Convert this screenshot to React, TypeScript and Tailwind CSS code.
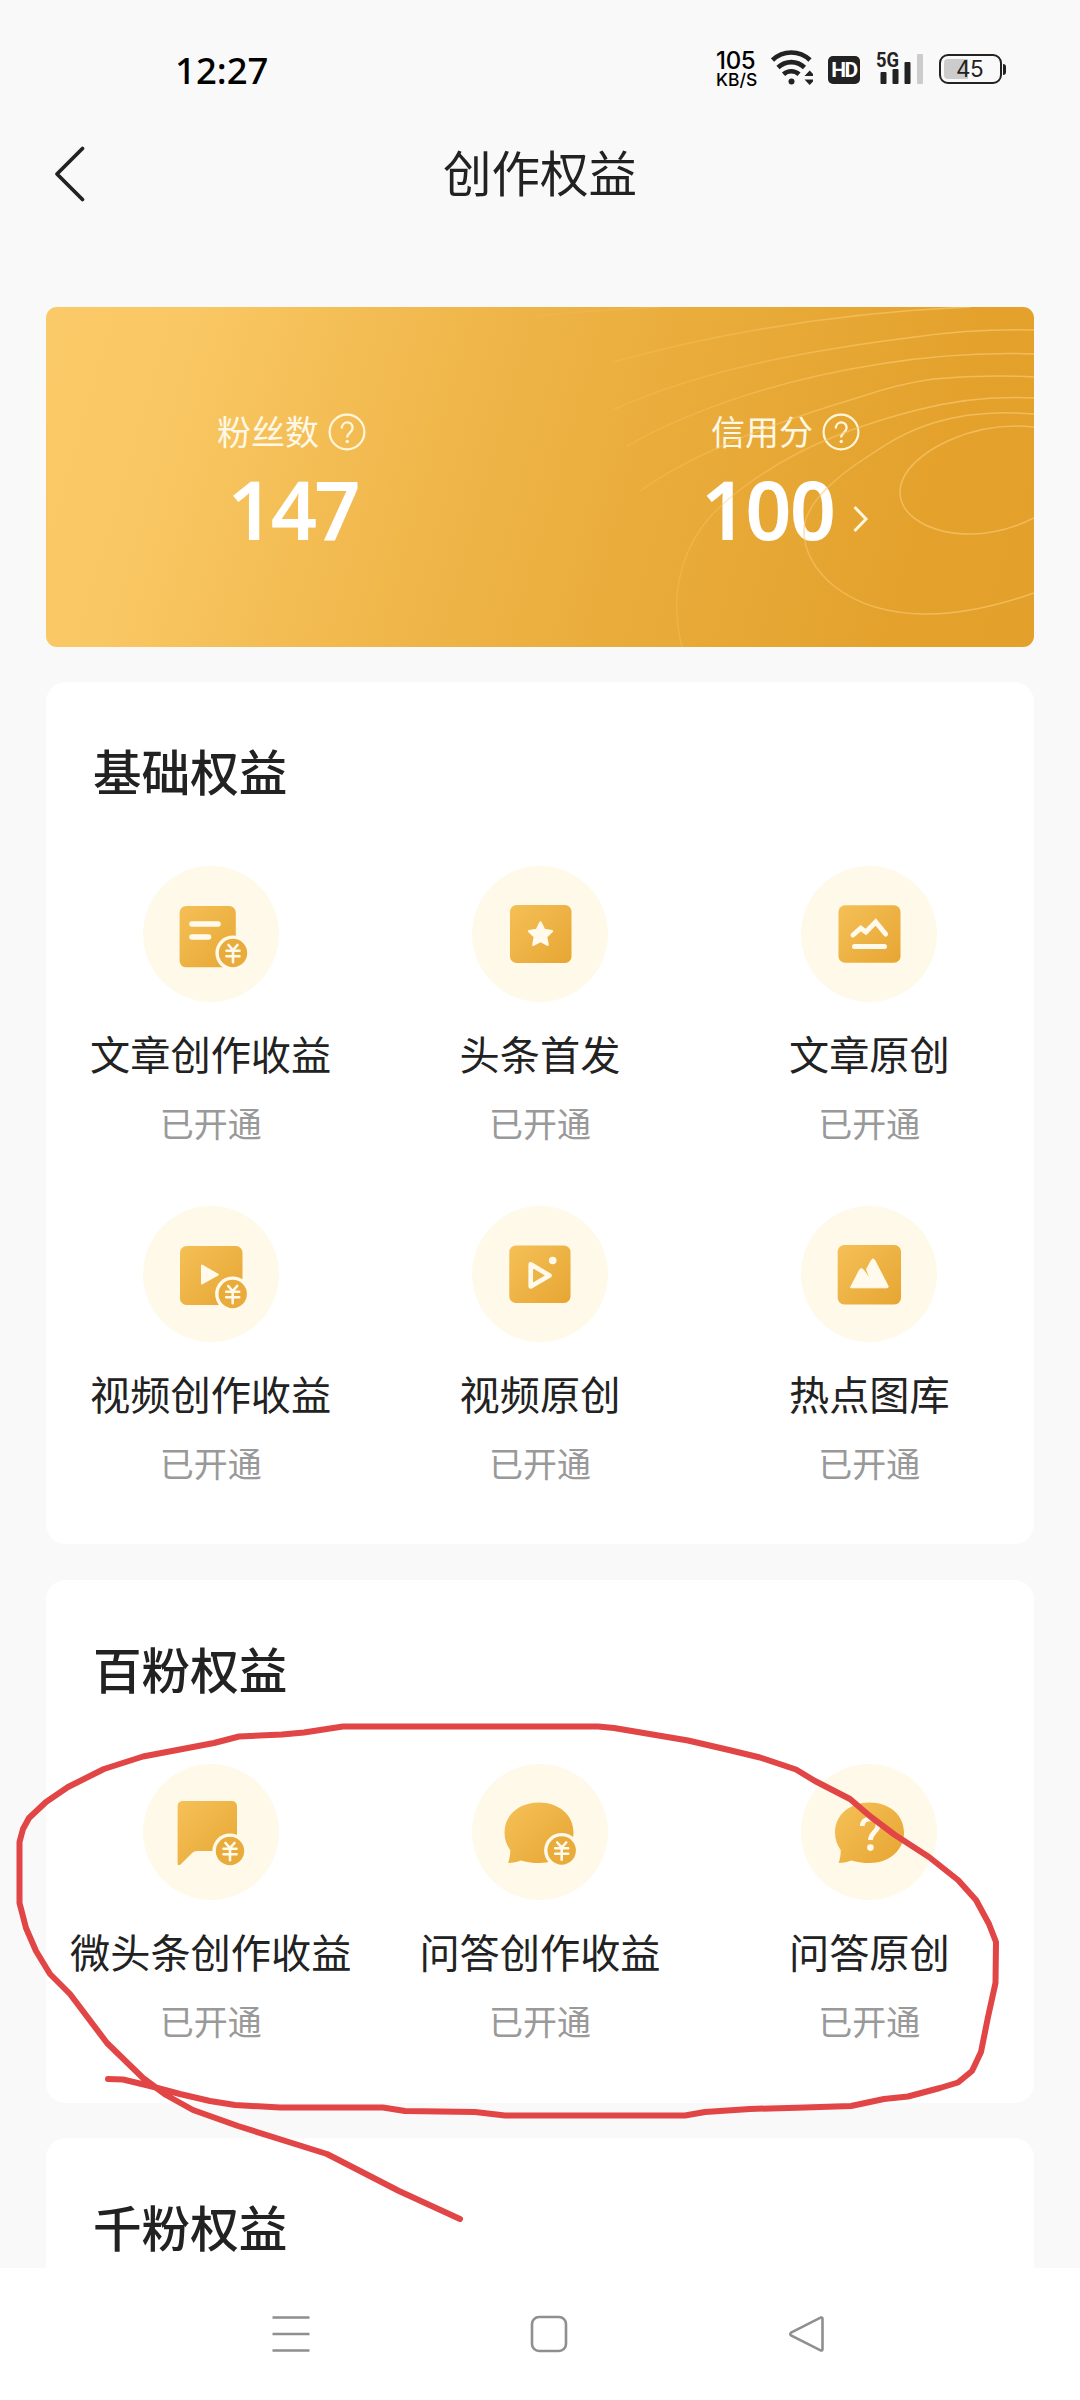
import React from "react";

const GOLD = "url(#gold)";
const CREAM = "#fffaec";

/** Shared gradient used by every benefit icon. */
function GoldDefs() {
  return (
    <svg width="0" height="0" className="absolute" aria-hidden="true">
      <defs>
        <linearGradient id="gold" gradientUnits="userSpaceOnUse" x1="38" y1="38" x2="100" y2="100">
          <stop offset="0" stopColor="#f5c057" />
          <stop offset="1" stopColor="#e6a532" />
        </linearGradient>
      </defs>
    </svg>
  );
}

function Coin({ x, y }: { x: number; y: number }) {
  return (
    <g transform={`translate(${x} ${y})`}>
      <circle r="17.6" fill={CREAM} />
      <circle r="14.2" fill="#e9ac3c" />
      <path
        d="M-4.5 -8 L0 -3 L4.5 -8 M-6.5 -2.2 H6.5 M-6.5 3.2 H6.5 M0 -3 V9.3"
        fill="none"
        stroke={CREAM}
        strokeWidth="2.6"
        strokeLinecap="round"
      />
    </g>
  );
}

const BUBBLE =
  "M67 38.5 C87 38.5 101.5 51 101.5 68.5 C101.5 86 87 99 67 99 C60 99 54 97.8 49 96.4 C45 97.6 41 99 36.2 99 C37.6 94.5 38.4 90.5 38.2 86 C34.5 81 32.5 75 32.5 68.5 C32.5 51 47 38.5 67 38.5 Z";

const icons: Record<string, React.ReactNode> = {
  article: (
    <>
      <rect x="36.6" y="40" width="56.2" height="61.3" rx="6.5" fill={GOLD} />
      <path d="M49 58 H75 M49 71 H65.5" stroke={CREAM} strokeWidth="5.6" strokeLinecap="round" />
      <Coin x={90} y={87} />
    </>
  ),
  star: (
    <>
      <rect x="38" y="39" width="61.5" height="58" rx="6.5" fill={GOLD} />
      <path
        d="M68.5 56.5 L72.2 64 L80 65.1 L74.2 70.6 L75.6 78.8 L68.5 74.9 L61.4 78.8 L62.8 70.6 L57 65.1 L64.8 64 Z"
        fill={CREAM}
        stroke={CREAM}
        strokeWidth="2.4"
        strokeLinejoin="round"
      />
    </>
  ),
  chart: (
    <>
      <rect x="37.5" y="39.3" width="62" height="57.4" rx="6.5" fill={GOLD} />
      <path
        d="M52 69 L59.7 62.2 L64.9 66 L74.7 56 L84.6 68 M53.5 80.5 H83.5"
        fill="none"
        stroke={CREAM}
        strokeWidth="5"
        strokeLinecap="round"
        strokeLinejoin="miter"
      />
    </>
  ),
  video: (
    <>
      <rect x="37" y="40" width="62.5" height="59" rx="6.5" fill={GOLD} />
      <path
        d="M59 59.6 L74.7 68.7 L59 77.4 Z"
        fill={CREAM}
        stroke={CREAM}
        strokeWidth="2"
        strokeLinejoin="round"
      />
      <Coin x={89.7} y={88} />
    </>
  ),
  play: (
    <>
      <rect x="37.3" y="39.5" width="61.2" height="57.5" rx="6.5" fill={GOLD} />
      <path
        d="M58.7 58.3 L77.5 69.5 L58.7 80.4 Z"
        fill="none"
        stroke={CREAM}
        strokeWidth="4.6"
        strokeLinejoin="round"
      />
      <circle cx="80.7" cy="54.5" r="3.8" fill={CREAM} />
    </>
  ),
  gallery: (
    <>
      <rect x="36.7" y="39" width="63.3" height="59.5" rx="6.5" fill={GOLD} />
      <path
        d="M49.7 81 L58.6 63.8 Q60.3 61.2 62.3 63.8 L69.3 73 L65.5 63.4 L70.5 54 Q72 51.6 73.6 54 L87 80 Q87.6 81.8 86 81.8 H50.3 Q49.2 82 49.7 81 Z"
        fill={CREAM}
        stroke={CREAM}
        strokeWidth="1"
        strokeLinejoin="round"
      />
    </>
  ),
  post: (
    <>
      <path
        d="M40 37 H88.5 Q94 37 94 42.5 V87 H54 Q51 87 49 89 L37.5 100.4 Q34.6 102.5 34.6 99 V42.5 Q34.6 37 40 37 Z"
        fill={GOLD}
      />
      <Coin x={87} y={87} />
    </>
  ),
  answer: (
    <>
      <path d={BUBBLE} fill={GOLD} />
      <Coin x={89.7} y={86.5} />
    </>
  ),
  question: (
    <>
      <path d={BUBBLE} fill={GOLD} transform="translate(1.5 0)" />
      <path
        d="M61.3 62 C61.3 52.5 77 52.5 77 61.5 C77 67.5 69.5 68.5 69.5 76"
        fill="none"
        stroke={CREAM}
        strokeWidth="4.8"
      />
      <circle cx="69.4" cy="83.6" r="3.3" fill={CREAM} />
    </>
  ),
};

type Item = { icon: string; label: string };

const basic: Item[] = [
  { icon: "article", label: "文章创作收益" },
  { icon: "star", label: "头条首发" },
  { icon: "chart", label: "文章原创" },
  { icon: "video", label: "视频创作收益" },
  { icon: "play", label: "视频原创" },
  { icon: "gallery", label: "热点图库" },
];

const hundred: Item[] = [
  { icon: "post", label: "微头条创作收益" },
  { icon: "answer", label: "问答创作收益" },
  { icon: "question", label: "问答原创" },
];

function Benefit({ icon, label }: Item) {
  return (
    <div className="flex h-[340px] flex-col items-center">
      <div className="h-[136px] w-[136px] rounded-full bg-[#fff9ea]">
        <svg width="136" height="136" viewBox="0 0 136 136">
          {icons[icon]}
        </svg>
      </div>
      <div className="mt-[27px] h-[48px] text-[40.2px] leading-[48px] whitespace-nowrap text-[#222]">{label}</div>
      <div className="mt-[26px] h-[40px] text-[34px] leading-[40px] text-[#999]">已开通</div>
    </div>
  );
}

function Section({ title, items, className }: { title: string; items: Item[]; className: string }) {
  return (
    <section className={`mx-[46px] shrink-0 overflow-hidden rounded-[20px] bg-white ${className}`}>
      <h2 className="mt-[58px] h-[60px] pl-[47px] text-[48.6px] leading-[60px] font-medium text-[#222]">{title}</h2>
      <div className="mt-[66px] grid grid-cols-3">
        {items.map((item) => (
          <Benefit key={item.label} {...item} />
        ))}
      </div>
    </section>
  );
}

function StatusBar() {
  return (
    <div className="flex h-[100px] shrink-0 items-start text-black">
      <div className="mt-[46px] ml-[175px] w-[541px] font-['Noto_Sans'] text-[36.5px] leading-[48px] font-medium">
        12:27
      </div>
      <div className="mt-[47px] w-[55px] font-['Inter'] font-medium">
        <div className="h-[26px] text-[24px] leading-[28px] tracking-[-0.3px]">105</div>
        <div className="h-[14px] text-[17.5px] leading-[14px]">KB/S</div>
      </div>
      <svg className="mt-[50px]" width="42" height="36" viewBox="0 0 42 36" fill="none" stroke="#222">
        <path d="M1.5 11.5 A27 27 0 0 1 39 11.5" strokeWidth="4.6" transform="translate(0 -1.5)" />
        <path d="M7 17.5 A19 19 0 0 1 33.5 17.5" strokeWidth="4.6" />
        <path d="M12.5 24.3 A11.5 11.5 0 0 1 28 24.3" strokeWidth="4.6" />
        <circle cx="20.5" cy="31.5" r="3" fill="#222" stroke="none" />
        <path d="M33.5 26 L38.7 20.5 L44 26 Z M33.5 29.5 H44 L38.7 35 Z" fill="#222" stroke="none" />
      </svg>
      <div className="mt-[56px] ml-[15px] flex h-[28px] w-[32px] items-center justify-center rounded-[5px] bg-[#222] font-['Roboto'] text-[21px] leading-none font-bold tracking-[-1.5px] text-white">
        HD
      </div>
      <svg className="mt-[48px] ml-[16px]" width="50" height="38" viewBox="0 0 50 38">
        <text
          x="0"
          y="18.6"
          fontFamily="Roboto"
          fontWeight="700"
          fontSize="20"
          textLength="23"
          lengthAdjust="spacingAndGlyphs"
          fill="#222"
        >
          5G
        </text>
        <rect x="4.5" y="24" width="6" height="12" rx="1" fill="#222" />
        <rect x="16.5" y="21" width="6" height="15" rx="1" fill="#222" />
        <rect x="28.5" y="14" width="6" height="22" rx="1" fill="#222" />
        <rect x="41" y="6" width="6" height="30" rx="1" fill="#ccc" />
      </svg>
      <div className="mt-[54px] ml-[13px] flex items-center">
        <div className="flex h-[30px] w-[63px] items-center rounded-[9px] border-2 border-[#222] p-[3px]">
          <div className="h-full w-[24px] rounded-l-[4px] bg-[#ccc]" />
          <div className="-ml-[12px] font-['Inter'] text-[22.5px] leading-none tracking-[-0.5px] text-[#222]">45</div>
        </div>
        <div className="ml-px h-[11px] w-[3px] rounded-r-sm bg-[#222]" />
      </div>
    </div>
  );
}

function Stat({ label, value, arrow }: { label: string; value: string; arrow?: boolean }) {
  return (
    <div className="flex flex-1 flex-col items-center pt-[103px] pr-[3px]">
      <div className="flex h-[44px] items-center gap-[9px] text-[34px] leading-[44px] text-[#fff8e6]">
        <span className="mt-[-2px]">{label}</span>
        <svg width="38" height="38" viewBox="0 0 38 38" fill="none" stroke="#fff6dc">
          <circle cx="19" cy="19" r="17.4" strokeWidth="2.2" />
          <path d="M13.8 15.5 C13.8 7.5 24.6 7.5 24.6 14.8 C24.6 19.5 19.2 19.8 19.2 24.5" strokeWidth="2.3" />
          <circle cx="19.2" cy="28.5" r="1.7" fill="#fff6dc" stroke="none" />
        </svg>
      </div>
      <div
        className={
          arrow
            ? "mt-[-1px] flex items-center font-['Noto_Sans'] text-[81px] leading-[112px] font-semibold tracking-[-2px] text-white"
            : "mt-[-1px] pl-[2px] font-['Noto_Sans'] text-[81px] leading-[112px] font-semibold tracking-[-3px] text-white"
        }
      >
        {value}
        {arrow && (
          <svg className="mt-[19px] ml-[18px]" width="18" height="30" viewBox="0 0 18 30" fill="none">
            <path d="M2.5 3 L14 15 L2.5 27" stroke="#fff6dc" strokeWidth="3" />
          </svg>
        )}
      </div>
    </div>
  );
}

function SummaryCard() {
  return (
    <div className="relative mx-[46px] mt-[72px] flex h-[340px] shrink-0 overflow-hidden rounded-[11px] bg-[linear-gradient(106deg,#fbca68_0%,#f9c763_14%,#efb548_42%,#e8aa38_66%,#e4a22d_86%,#e3a02b_100%)]">
      <svg className="absolute inset-0" width="988" height="340" viewBox="46 307 988 340" fill="none">
        <defs>
          <linearGradient id="ring" gradientUnits="userSpaceOnUse" x1="560" y1="0" x2="900" y2="0">
            <stop offset="0" stopColor="#f8ca70" stopOpacity="0.1" />
            <stop offset="1" stopColor="#f8c466" stopOpacity="0.75" />
          </linearGradient>
        </defs>
        <g stroke="url(#ring)" strokeWidth="1.5">
          <path d="M1034 427 C1005 424 975 429 950 440 C925 451 900 470 900 492 C900 516 930 534 970 534 C993 534 1014 528 1034 518" />
          <path d="M1034 414 C1000 411 965 413 933 423 C905 432 888 443 867 457 C845 471 805 500 804 530 C803 568 845 614 927 614 C965 614 1000 605 1034 593" />
          <path d="M1034 398 C995 396 955 400 917 410 C878 420 838 433 800 452 C765 470 720 500 700 530 C675 567 672 610 682 647" />
          <path d="M1034 377 C1000 375 965 376 933 379 C905 383 880 390 860 397 C790 418 700 448 640 491" />
          <path d="M1034 354 C980 352 930 356 880 364 C790 378 700 405 627 446" />
          <path d="M1034 330 C990 329 950 332 915 337 C810 350 700 370 613 410" />
          <path d="M970 307 C850 312 730 330 613 362" />
          <path d="M660 307 C620 309 580 311 537 316" />
        </g>
      </svg>
      <Stat label="粉丝数" value="147" />
      <Stat label="信用分" value="100" arrow />
    </div>
  );
}

/** Free-hand red marking over the page. */
function Marking() {
  return (
    <svg
      className="pointer-events-none absolute top-0 left-0"
      width="1080"
      height="2400"
      viewBox="0 0 1080 2400"
      fill="none"
      stroke="#e24545"
      strokeWidth="6"
      strokeLinecap="round"
      strokeLinejoin="round"
    >
      <path d="M108 2079 L123 2079.5 L150 2086 L180 2094 L210 2101 L235 2105 L280 2107.5 L383 2107.5 L405 2111 L475 2112 L505 2115.5 L685 2115.5 L705 2112 L750 2109 L805 2107.5 L851 2106 L884 2099 L908 2096.5 L940 2088 L958 2082.5 L972 2071 L981 2052 L988 2017 L995.5 1983 L996 1942 L989 1924 L976 1900 L958 1880 L929 1857 L895 1835 L871 1817 L850 1799 L815 1781 L796 1769.5 L760 1757.5 L729 1750 L688 1740.5 L614 1728 L598 1726.5 L343 1726.5 L304 1732.5 L282 1734.5 L239 1736.5 L214 1743 L143 1756.5 L104 1769 L68 1787 L46 1802 L29 1818 L23 1829 L19.5 1842 L19.5 1903 L26 1928 L36 1951 L50 1974 L70 1994 L107 2043 L143 2078 L166 2095 L193 2110 L238 2126 L327 2154 L399 2191 L460 2219" />
    </svg>
  );
}

function NavBar() {
  return (
    <div className="flex h-[132px] shrink-0 items-center justify-center bg-white pl-[18px]">
      <div className="grid w-[773px] grid-cols-3 justify-items-center">
        {[
          <path key="m" d="M1.5 3.5 H38.5 M1.5 20 H38.5 M1.5 36.5 H38.5" />,
          <rect key="h" x="3" y="3" width="34" height="34" rx="7" />,
          <path key="b" d="M4 18.6 L33.5 3.6 Q35.5 3 35.5 5 V35 Q35.5 37 33.5 36.4 L4 21.4 Q2.5 20 4 18.6 Z" />,
        ].map((shape, i) => (
          <svg key={i} width="40" height="40" viewBox="0 0 40 40" fill="none" stroke="#8f8f8f" strokeWidth="2.6">
            {shape}
          </svg>
        ))}
      </div>
    </div>
  );
}

export default function App() {
  return (
    <div className="relative flex h-[2400px] w-[1080px] flex-col overflow-hidden bg-[#f9f9f9] font-['Noto_Sans_CJK_SC',sans-serif]">
      <GoldDefs />
      <StatusBar />
      <header className="grid h-[135px] shrink-0 grid-cols-[120px_1fr_120px]">
        <svg className="mt-[45px] ml-[52px]" width="36" height="58" viewBox="0 0 36 58" fill="none">
          <path d="M30.5 3.5 L5 29 L30.5 54.5" stroke="#222" strokeWidth="3.8" strokeLinecap="round" strokeLinejoin="round" />
        </svg>
        <h1 className="mt-[41px] text-center text-[48.5px] leading-[60px] font-normal text-[#222]">创作权益</h1>
      </header>
      <main className="flex min-h-0 flex-1 flex-col overflow-hidden">
        <SummaryCard />
        <Section title="基础权益" items={basic} className="mt-[35px] h-[862px]" />
        <Section title="百粉权益" items={hundred} className="mt-[36px] h-[523px]" />
        <Section title="千粉权益" items={[]} className="mt-[35px] h-[200px]" />
      </main>
      <NavBar />
      <Marking />
    </div>
  );
}
